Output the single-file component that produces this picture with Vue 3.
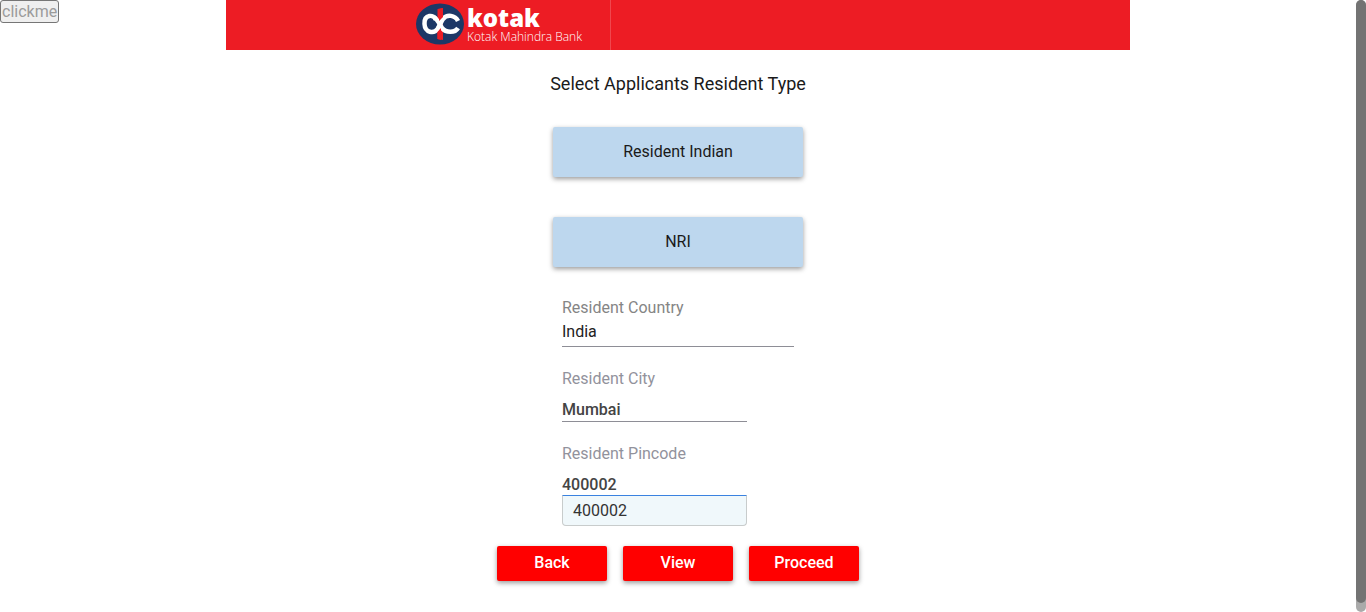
<script setup>
import { ref } from 'vue'

const country = ref('India')
const city = ref('Mumbai')
const pincode = ref('400002')
const residentTypes = ['Resident Indian', 'NRI']
const actions = ['Back', 'View', 'Proceed']
const suggestions = ['400002']
</script>

<template>
  <div class="shell">
    <div class="page">
      <button class="click-me" type="button" disabled>clickme</button>

      <header class="bar">
        <div class="brand">
          <svg class="mark" viewBox="0 0 48 42" aria-hidden="true">
            <ellipse cx="24" cy="21" rx="24" ry="20.5" fill="#1d3766" />
            <path d="M21.5 6L27 5V37L21.5 36Z" fill="#ed1c24" />
            <g fill="none" stroke="#fff" stroke-width="4.5">
              <path d="M20 17C18 11 8 11 8.500 21C9 30 18 31 21.500 26C24 22 25 19 27 16C31 11 39 12 42 18" />
              <path d="M18 14C21 16 23 20 26 25C30 30 39 30 42 25" />
            </g>
            <path d="M23 6L27 5V14L23 18Z" fill="#ed1c24" />
            <path d="M21.5 29L25 25V37L21.5 36Z" fill="#ed1c24" />
          </svg>
          <div class="brand-text">
            <strong>kotak</strong>
            <span>Kotak Mahindra Bank</span>
          </div>
        </div>
      </header>

      <main class="content">
        <h1>Select Applicants Resident Type</h1>
        <div class="types">
          <button v-for="type in residentTypes" :key="type" type="button">{{ type }}</button>
        </div>

        <form class="fields" @submit.prevent>
          <div class="field country">
            <label for="country">Resident Country</label>
            <input id="country" v-model="country" type="text" />
          </div>
          <div class="field">
            <label for="city">Resident City</label>
            <input id="city" v-model="city" type="text" />
          </div>
          <div class="field pincode">
            <label for="pincode">Resident Pincode</label>
            <input id="pincode" v-model="pincode" type="text" />
            <ul class="suggestions">
              <li v-for="item in suggestions" :key="item">{{ item }}</li>
            </ul>
          </div>
        </form>

        <div class="actions">
          <button v-for="action in actions" :key="action" type="button">{{ action }}</button>
        </div>
      </main>
    </div>
    <div class="track"><div class="thumb"></div></div>
  </div>
</template>

<style>
body {
  background: #fff;
}
</style>

<style scoped>
.shell {
  display: flex;
  min-height: 100vh;
  font-family: Roboto, "Liberation Sans", sans-serif;
  color: #1a1a1a;
}
.shell * {
  box-sizing: border-box;
}
button,
input {
  font: inherit;
}
.page {
  position: relative;
  flex: 1;
}
.click-me {
  position: absolute;
  top: 0;
  left: 0;
  padding: 0 1px;
  border: 1px solid #767676;
  border-radius: 3px;
  background: #efefef;
  color: #9b9b9b;
  font-size: 16px;
  line-height: 21px;
}
.bar {
  width: 66.6667%;
  height: 50px;
  margin: 0 auto;
  background: #ed1c24;
}
.brand {
  display: flex;
  align-items: flex-start;
  gap: 3px;
  width: 385px;
  height: 100%;
  padding: 3px 0 0 190px;
  border-right: 1px solid #f0474e;
}
.mark {
  flex: none;
  width: 48px;
  height: 42px;
}
.brand-text {
  display: flex;
  flex-direction: column;
  color: #fff;
  font-family: "Open Sans", sans-serif;
  white-space: nowrap;
}
.brand-text strong {
  font-size: 24px;
  font-weight: 800;
  line-height: 29px;
}
.brand-text span {
  font-size: 12px;
  font-weight: 300;
  line-height: 10px;
}
.content {
  display: flex;
  flex-direction: column;
  align-items: center;
}
h1 {
  margin: 22px 0 31px;
  font-size: 18px;
  font-weight: 400;
  line-height: 24px;
}
.types {
  display: flex;
  flex-direction: column;
  gap: 40px;
}
.types button {
  width: 250px;
  height: 50px;
  padding: 0 0 1px;
  border: 0;
  border-radius: 2px;
  background: #bdd7ee;
  color: #1a1a1a;
  font-size: 16px;
  box-shadow: 0 2px 5px rgba(0, 0, 0, 0.4);
}
.fields {
  display: flex;
  flex-direction: column;
  width: 232px;
  margin-top: 31px;
}
.field {
  display: flex;
  flex-direction: column;
  width: 185px;
  margin-top: 22px;
}
.field.country {
  width: 100%;
  margin-top: 0;
}
label {
  color: #92929c;
  font-size: 16px;
  line-height: 20px;
}
.field input {
  width: 100%;
  height: 33px;
  padding: 9px 0 0;
  border: 0;
  border-bottom: 1px solid #8e8e96;
  outline: 0;
  background: transparent;
  color: #444;
  font-size: 16px;
  font-weight: 500;
}
.country label {
  color: #858585;
}
.field.country input {
  height: 29px;
  padding: 0 0 2px;
  color: #222;
  font-weight: 400;
}
.field.pincode input {
  height: 31px;
  border-bottom: 0;
}
.suggestions {
  margin: 0;
  padding: 0;
  list-style: none;
  border: 1px solid #c8cccc;
  border-top-color: #3a82e0;
  border-radius: 0 0 4px 4px;
  background: #f0f8fb;
}
.suggestions li {
  padding: 0 10px;
  color: #333;
  font-size: 16px;
  line-height: 29px;
}
.actions {
  display: flex;
  gap: 16px;
  margin-top: 20px;
}
.actions button {
  width: 110px;
  height: 35px;
  padding: 0 0 2px;
  border: 0;
  border-radius: 2px;
  background: #f00;
  color: #fff;
  font-size: 16px;
  font-weight: 500;
  box-shadow: 0 2px 5px rgba(0, 0, 0, 0.4);
}
.track {
  flex: none;
  width: 10px;
  border-radius: 5px;
  background: #aaa;
}
.thumb {
  height: 98.5vh;
  border-radius: 5px;
  background: #737373;
}
</style>
